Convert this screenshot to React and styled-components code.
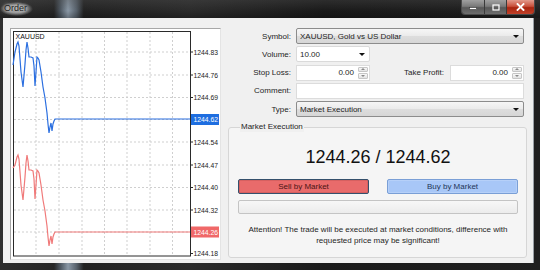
import React from 'react';
import styled, { createGlobalStyle } from 'styled-components';

const GlobalStyle = createGlobalStyle`
  html, body {
    margin: 0;
    padding: 0;
    background: #141414;
  }
  body {
    width: 540px;
    height: 270px;
    overflow: hidden;
    font-family: "Liberation Sans", Arial, sans-serif;
  }
`;

// Window chrome
const Window = styled.div`
  width: 540px;
  height: 270px;
  display: flex;
  flex-direction: column;
  background: linear-gradient(
    90deg,
    #2e2e2e 0%,
    #262626 10%,
    #4e5862 11.2%,
    #8a98a6 12.6%,
    #56606a 14.2%,
    #222 15.5%,
    #2b2b2b 35%,
    #1a1a1a 60%,
    #202020 100%
  );
`;

const TitleBar = styled.div`
  height: 18px;
  flex: none;
  display: flex;
  justify-content: space-between;
  align-items: flex-start;
  background: linear-gradient(180deg, rgba(80, 80, 80, 0.35) 0%, rgba(0, 0, 0, 0) 60%, rgba(0, 0, 0, 0.25) 100%);
`;

const Title = styled.span`
  margin: 2px 0 0 0;
  padding: 1px 6px 2px 4px;
  font-size: 9px;
  line-height: 11px;
  color: #1c1c1c;
  text-shadow: 0 0 3px #d0d0d0, 0 0 5px #c8c8c8;
  background: radial-gradient(closest-side, rgba(185, 185, 185, 0.75) 55%, rgba(120, 120, 120, 0) 100%);
`;

const Controls = styled.div`
  display: flex;
  margin-right: 5px;
  height: 14px;
  border: 1px solid #4a4a4a;
  border-top: none;
  border-radius: 0 0 4px 4px;
  overflow: hidden;
`;

const CtrlButton = styled.div`
  width: ${(p) => p.$w}px;
  height: 14px;
  display: flex;
  align-items: center;
  justify-content: center;
  border-left: ${(p) => (p.$first ? 'none' : '1px solid #3a3a3a')};
  background: ${(p) =>
    p.$close
      ? 'linear-gradient(180deg, #e29a8c 0%, #c9513c 45%, #a8250f 55%, #c2412a 100%)'
      : 'linear-gradient(180deg, #a0a0a0 0%, #7a7a7a 45%, #585858 55%, #6e6e6e 100%)'};
`;

const Frame = styled.div`
  flex: 1;
  display: flex;
  padding: 0 7px 7px 3px;
  min-height: 0;
`;

const Body = styled.div`
  flex: 1;
  display: flex;
  gap: 7px;
  padding: 10px 6px 3px 7px;
  background: #f0f0f0;
  box-shadow: 1px 0 0 #9aa0a6;
`;

// Chart
const ChartPanel = styled.div`
  width: 211px;
  height: 232px;
  flex: none;
  box-sizing: border-box;
  border: 1px solid #a7a7a7;
  border-right-color: #e4e4e4;
  border-bottom-color: #e4e4e4;
  background: #fff;
  svg {
    display: block;
    font-family: "Liberation Sans", Arial, sans-serif;
  }
`;

const bluePts = [
  [13, 65], [15, 52], [17, 44], [18, 42], [19, 46], [21, 72], [23, 87], [25, 64],
  [26, 50], [27, 42], [28, 48], [29, 57], [31, 57], [33, 58], [34, 66], [35, 86],
  [36, 72], [37, 57], [38, 58], [39, 60], [41, 72], [43, 87], [45, 98], [47, 113],
  [48, 124], [49, 133], [50, 127], [51, 123], [52, 131], [53, 124], [54, 121],
  [55, 119], [190, 119],
];
const redPts = bluePts.map(([x, y], i) => [x, i === 0 ? 168 : y + 113]);
const toPath = (pts) => pts.map(([x, y], i) => `${i ? 'L' : 'M'}${x} ${y}`).join(' ');

const levels = [
  ['1244.83', 52], ['1244.76', 75], ['1244.69', 97.5], ['1244.62', 119.5, '#1e6ee0'],
  ['1244.54', 142], ['1244.47', 165], ['1244.40', 187.5], ['1244.32', 210],
  ['1244.26', 232, '#f06868'], ['1244.18', 253.5],
];
const vLines = [36, 59, 82, 104.5, 127, 150, 172.5];

function Chart() {
  return (
    <ChartPanel>
      <svg width="209" height="230" viewBox="11 29 209 230">
        {levels.slice(0, 9).map(([, y]) => (
          <line key={y} x1="14" x2="190" y1={y} y2={y} stroke="#cfcfcf" strokeDasharray="2 2" />
        ))}
        {vLines.map((x) => (
          <line key={x} x1={x} x2={x} y1="32" y2="256" stroke="#cfcfcf" strokeDasharray="2 2" />
        ))}
        <rect x="13.5" y="31.5" width="177" height="224.5" fill="none" stroke="#2a2a2a" />
        <path d={toPath(bluePts)} fill="none" stroke="#2b6fe0" strokeWidth="1.2" />
        <path d={toPath(redPts)} fill="none" stroke="#f07a7a" strokeWidth="1.2" />
        <text x="15.5" y="38.5" fontSize="7" fill="#111">
          XAUUSD
        </text>
        {levels.map(([label, y, bg]) => (
          <g key={label}>
            <line x1="190" x2="193" y1={y} y2={y} stroke="#2a2a2a" />
            {bg && <rect x="191" y={y - 5.5} width="28" height="11" fill={bg} />}
            <text
              x="193.5"
              y={y + 2.5}
              fontSize="7"
              textLength="24.5"
              lengthAdjust="spacingAndGlyphs"
              fill={bg ? '#fff' : '#222'}
            >
              {label}
            </text>
          </g>
        ))}
      </svg>
    </ChartPanel>
  );
}

// Form
const Form = styled.div`
  width: 299px;
  flex: none;
  display: flex;
  flex-direction: column;
  gap: 2.25px;
  font-size: 8px;
  color: #1e1e1e;
`;

const Row = styled.div`
  display: flex;
  align-items: center;
  height: 16px;
  padding-right: 3px;
`;

const Label = styled.span`
  width: ${(p) => p.$w || 63}px;
  flex: ${(p) => (p.$grow ? 1 : 'none')};
  margin-right: ${(p) => p.$gap || 5}px;
  text-align: right;
  white-space: nowrap;
`;

const Select = styled.div`
  width: ${(p) => p.$w}px;
  height: 16px;
  box-sizing: border-box;
  display: flex;
  align-items: center;
  justify-content: space-between;
  padding: 0 4px 0 3px;
  border: 1px solid ${(p) => (p.$plain ? '#dadada' : '#8c8c8c')};
  border-radius: 2px;
  background: ${(p) =>
    p.$plain ? '#fff' : 'linear-gradient(180deg, #f6f6f6 0%, #ebebeb 48%, #dddddd 52%, #d6d6d6 100%)'};
  white-space: nowrap;
`;

const Arrow = styled.i`
  width: 0;
  height: 0;
  border-left: 3px solid transparent;
  border-right: 3px solid transparent;
  border-top: 3px solid #111;
  margin-top: 1px;
`;

const TextBox = styled.div`
  width: ${(p) => p.$w}px;
  height: 16px;
  box-sizing: border-box;
  display: flex;
  align-items: stretch;
  border: 1px solid #dcdcdc;
  background: #fff;
`;

const Value = styled.span`
  flex: 1;
  display: flex;
  align-items: center;
  justify-content: flex-end;
  padding-right: 3px;
`;

const Spin = styled.div`
  width: 12px;
  display: flex;
  flex-direction: column;
  gap: 1px;
  padding: 1px;
  box-sizing: border-box;
`;

const SpinHalf = styled.div`
  flex: 1;
  display: flex;
  align-items: center;
  justify-content: center;
  border: 1px solid #c6c6c6;
  border-radius: 1px;
  background: linear-gradient(180deg, #f8f8f8, #e2e2e2);
  &::after {
    content: '';
    border-left: 2px solid transparent;
    border-right: 2px solid transparent;
    ${(p) => (p.$up ? 'border-bottom: 2px solid #8a8a8a;' : 'border-top: 2px solid #8a8a8a;')}
  }
`;

function SpinBox({ value }) {
  return (
    <TextBox $w={74}>
      <Value>{value}</Value>
      <Spin>
        <SpinHalf $up />
        <SpinHalf />
      </Spin>
    </TextBox>
  );
}

// Market execution group
const Group = styled.fieldset`
  flex: 1;
  margin: 3px 0 2px 0;
  padding: 0 8px 0 9px;
  min-width: 0;
  border: 1px solid #d6d6d6;
  border-radius: 3px;
  background: #f5f5f5;
`;

const Legend = styled.legend`
  padding: 0 1px;
  margin-left: 2px;
  font-size: 8px;
  line-height: 10px;
  color: #1e1e1e;
  background: #f0f0f0;
`;

const GroupInner = styled.div`
  display: flex;
  flex-direction: column;
  align-items: stretch;
`;

const Price = styled.div`
  margin-top: 14px;
  font-size: 18px;
  line-height: 22px;
  text-align: center;
  color: #111;
`;

const Buttons = styled.div`
  margin-top: 11px;
  display: grid;
  grid-template-columns: 1fr 1fr;
  gap: 18px;
`;

const TradeButton = styled.div`
  height: 15px;
  box-sizing: border-box;
  display: flex;
  align-items: center;
  justify-content: center;
  font-size: 8px;
  border-radius: 2px;
  border: 1px solid ${(p) => (p.$sell ? '#34506c' : '#7a9fd6')};
  background: ${(p) => (p.$sell ? '#e96b6b' : '#a8c7f7')};
  color: ${(p) => (p.$sell ? '#4a1414' : '#1e3558')};
  box-shadow: ${(p) => (p.$sell ? 'inset 0 0 0 1px #d66060' : 'inset 0 0 0 1px #b6d0f8')};
`;

const Progress = styled.div`
  margin-top: 6px;
  height: 14px;
  box-sizing: border-box;
  border: 1px solid #c4c4c4;
  border-radius: 2px;
  background: linear-gradient(180deg, #f7f7f7, #ececec);
`;

const Notice = styled.p`
  margin: 11px 0 0;
  font-size: 8px;
  line-height: 10.5px;
  text-align: center;
  color: #1e1e1e;
`;

export default function App() {
  return (
    <>
      <GlobalStyle />
      <Window>
        <TitleBar>
          <Title>Order</Title>
          <Controls>
            <CtrlButton $w={22} $first>
              <svg width="8" height="6" viewBox="0 0 8 6">
                <rect x="0.5" y="3.5" width="7" height="2" fill="#fff" stroke="#333" strokeWidth="0.6" />
              </svg>
            </CtrlButton>
            <CtrlButton $w={21}>
              <svg width="8" height="7" viewBox="0 0 8 7">
                <rect x="1" y="1" width="6" height="5" fill="none" stroke="#fff" strokeWidth="1.2" />
              </svg>
            </CtrlButton>
            <CtrlButton $w={27} $close>
              <svg width="9" height="8" viewBox="0 0 9 8">
                <path d="M1.5 1 L7.5 7 M7.5 1 L1.5 7" stroke="#fff" strokeWidth="1.8" strokeLinecap="square" />
              </svg>
            </CtrlButton>
          </Controls>
        </TitleBar>
        <Frame>
          <Body>
            <Chart />
            <Form>
              <Row>
                <Label>Symbol:</Label>
                <Select $w={228}>
                  <span>XAUUSD, Gold vs US Dollar</span>
                  <Arrow />
                </Select>
              </Row>
              <Row>
                <Label>Volume:</Label>
                <Select $w={74} $plain>
                  <span>10.00</span>
                  <Arrow />
                </Select>
              </Row>
              <Row>
                <Label>Stop Loss:</Label>
                <SpinBox value="0.00" />
                <Label $grow $gap={6}>Take Profit:</Label>
                <SpinBox value="0.00" />
              </Row>
              <Row>
                <Label>Comment:</Label>
                <TextBox $w={228} />
              </Row>
              <Row>
                <Label>Type:</Label>
                <Select $w={228}>
                  <span>Market Execution</span>
                  <Arrow />
                </Select>
              </Row>
              <Group>
                <Legend>Market Execution</Legend>
                <GroupInner>
                  <Price>1244.26 / 1244.62</Price>
                  <Buttons>
                    <TradeButton $sell>Sell by Market</TradeButton>
                    <TradeButton>Buy by Market</TradeButton>
                  </Buttons>
                  <Progress />
                  <Notice>
                    Attention! The trade will be executed at market conditions, difference with
                    <br />
                    requested price may be significant!
                  </Notice>
                </GroupInner>
              </Group>
            </Form>
          </Body>
        </Frame>
      </Window>
    </>
  );
}
